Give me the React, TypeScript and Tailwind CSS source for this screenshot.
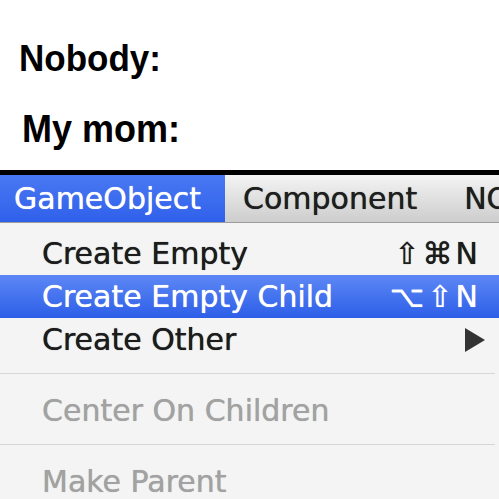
import React from 'react';

const menuFont = { fontFamily: '"DejaVu Sans", Verdana, sans-serif' };

const Item = ({ label, shortcut, arrow, selected, disabled }: any) => (
  <div
    className={
      'flex h-[43px] items-center justify-between whitespace-nowrap pl-[42px] text-[30px] leading-[43px] [text-shadow:0_0_0.7px_currentColor] ' +
      (selected
        ? 'bg-gradient-to-b from-[#5d87f5] to-[#2c5ee8] text-white'
        : disabled
          ? 'text-[#a2a2a2]'
          : 'text-[#1c1c1c]')
    }
  >
    <span>{label}</span>
    {shortcut && <span className="pr-[18px] tracking-[3px]">{shortcut}</span>}
    {arrow && (
      <svg width="20" height="24" viewBox="0 0 20 24" className="mr-[14px]">
        <polygon points="0,0 20,12 0,24" fill="#333" />
      </svg>
    )}
  </div>
);

const Separator = () => (
  <div className="flex h-[28px] items-start pt-[12px]">
    <div className="h-px w-[495px] bg-[#d6d6d6]" />
  </div>
);

export default function App() {
  return (
    <div className="h-[499px] w-[499px] overflow-hidden bg-white">
      {/* caption */}
      <div className="h-[170px] pt-[22px] font-bold text-black" style={{ fontFamily: '"Liberation Sans", Arial, sans-serif' }}>
        <div className="h-[71px] scale-y-[1.08] pl-[19px] text-[35px] leading-[71px]">Nobody:</div>
        <div className="h-[71px] scale-y-[1.08] pl-[22px] text-[36px] leading-[71px]">My mom:</div>
      </div>

      {/* menu screenshot */}
      <div className="border-t-[5px] border-black" style={menuFont}>
        <div className="flex h-[48px] overflow-hidden whitespace-nowrap border-b border-[#9c9c9c] bg-gradient-to-b from-[#f4f4f4] to-[#cdcdcd] text-[30px] leading-[47px] text-[#1e1e1e] [text-shadow:0_0_0.7px_currentColor]">
          <div className="w-[225px] shrink-0 bg-gradient-to-b from-[#4a78f3] to-[#2f60ea] pl-[14px] text-white">GameObject</div>
          <div className="shrink-0 pl-[18px]">Component</div>
          <div className="shrink-0 pl-[47px]">NO</div>
        </div>
        <div className="bg-[#f4f4f4] pt-[9px]">
          <Item label="Create Empty" shortcut="⇧⌘N" />
          <Item label="Create Empty Child" shortcut="⌥⇧N" selected />
          <Item label="Create Other" arrow />
          <Separator />
          <Item label="Center On Children" disabled />
          <Separator />
          <Item label="Make Parent" disabled />
        </div>
      </div>
    </div>
  );
}
